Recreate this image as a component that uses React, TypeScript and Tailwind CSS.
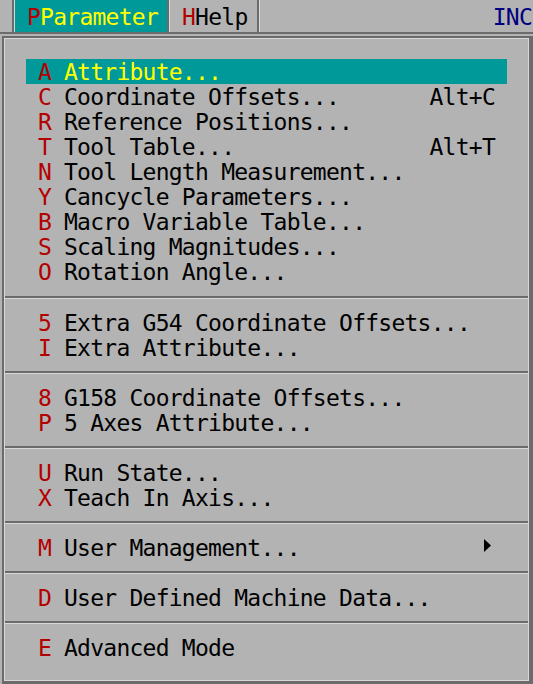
import React from "react"

type Item = { k: string; l: string; s?: string; active?: boolean; sub?: boolean }

const groups: Item[][] = [
  [
    { k: "A", l: "Attribute...", active: true },
    { k: "C", l: "Coordinate Offsets...", s: "Alt+C" },
    { k: "R", l: "Reference Positions..." },
    { k: "T", l: "Tool Table...", s: "Alt+T" },
    { k: "N", l: "Tool Length Measurement..." },
    { k: "Y", l: "Cancycle Parameters..." },
    { k: "B", l: "Macro Variable Table..." },
    { k: "S", l: "Scaling Magnitudes..." },
    { k: "O", l: "Rotation Angle..." },
  ],
  [
    { k: "5", l: "Extra G54 Coordinate Offsets..." },
    { k: "I", l: "Extra Attribute..." },
  ],
  [
    { k: "8", l: "G158 Coordinate Offsets..." },
    { k: "P", l: "5 Axes Attribute..." },
  ],
  [
    { k: "U", l: "Run State..." },
    { k: "X", l: "Teach In Axis..." },
  ],
  [{ k: "M", l: "User Management...", sub: true }],
  [{ k: "D", l: "User Defined Machine Data..." }],
  [{ k: "E", l: "Advanced Mode" }],
]

function Separator() {
  return (
    <div>
      <div className="h-[2px] bg-[#6b6b6b]" />
      <div className="h-px bg-[#d8d8d8]" />
    </div>
  )
}

function MenuRow({ item }: { item: Item }) {
  return (
    <div
      className={`ml-[21px] w-[481px] h-[25px] pt-[2px] flex items-center whitespace-pre ${
        item.active ? "bg-[#009999] text-[#ffff00]" : "text-black"
      }`}
    >
      <span className="pl-[12px] w-[38px] text-[#b40000]">{item.k}</span>
      <span className="flex-1">{item.l}</span>
      {item.s && <span className="pr-[12px]">{item.s}</span>}
      {item.sub && (
        <svg width="7" height="13" viewBox="0 0 7 13" className="mr-[16px] -mt-[6px]">
          <path d="M0 0 L7 6.5 L0 13 Z" fill="#000" />
        </svg>
      )}
    </div>
  )
}

export default function App() {
  return (
    <div className="h-[684px] w-[533px] overflow-hidden bg-[#b3b3b3] flex flex-col font-['DejaVu_Sans_Mono',monospace] text-[23px] tracking-[-0.75px] leading-none">
      {/* Menu bar */}
      <div className="h-[34px] border-b-2 border-[#6b6b6b] flex items-stretch whitespace-pre">
        <div className="w-[12px]" />
        <div className="w-[2px] bg-[#6b6b6b]" />
        <div className="w-px bg-[#d8d8d8]" />
        <div className="w-[152px] bg-[#009999] flex items-center pt-[2px] pl-[12px] text-[#ffff00]">
          <span className="text-[#b40000]">P</span>Parameter
        </div>
        <div className="w-[2px] bg-[#6b6b6b]" />
        <div className="w-px bg-[#d8d8d8]" />
        <div className="w-[87px] flex items-center pt-[2px] pl-[12px] text-black">
          <span className="text-[#b40000]">H</span>Help
        </div>
        <div className="w-[2px] bg-[#6b6b6b]" />
        <div className="w-px bg-[#d8d8d8]" />
        <div className="flex-1 flex items-center justify-end pt-[2px] text-[#000080]">
          <span className="pr-[1px]">INC</span>
        </div>
      </div>

      {/* Dropdown panel */}
      <div className="mt-[2px] ml-[2px] flex-1 flex flex-col border-t-2 border-l-2 border-r-4 border-b-[3px] border-[#6b6b6b]">
        <div className="flex-1 flex flex-col border border-[#d8d8d8]">
          {groups.map((g, gi) => (
            <React.Fragment key={gi}>
              {gi > 0 && <Separator />}
              <div
                className={
                  gi === 0
                    ? "pt-[20px] pb-[12px]"
                    : gi === groups.length - 1
                    ? "pt-[11px] flex-1"
                    : "py-[11px]"
                }
              >
                {g.map((it, i) => (
                  <MenuRow key={i} item={it} />
                ))}
              </div>
            </React.Fragment>
          ))}
        </div>
      </div>
    </div>
  )
}
